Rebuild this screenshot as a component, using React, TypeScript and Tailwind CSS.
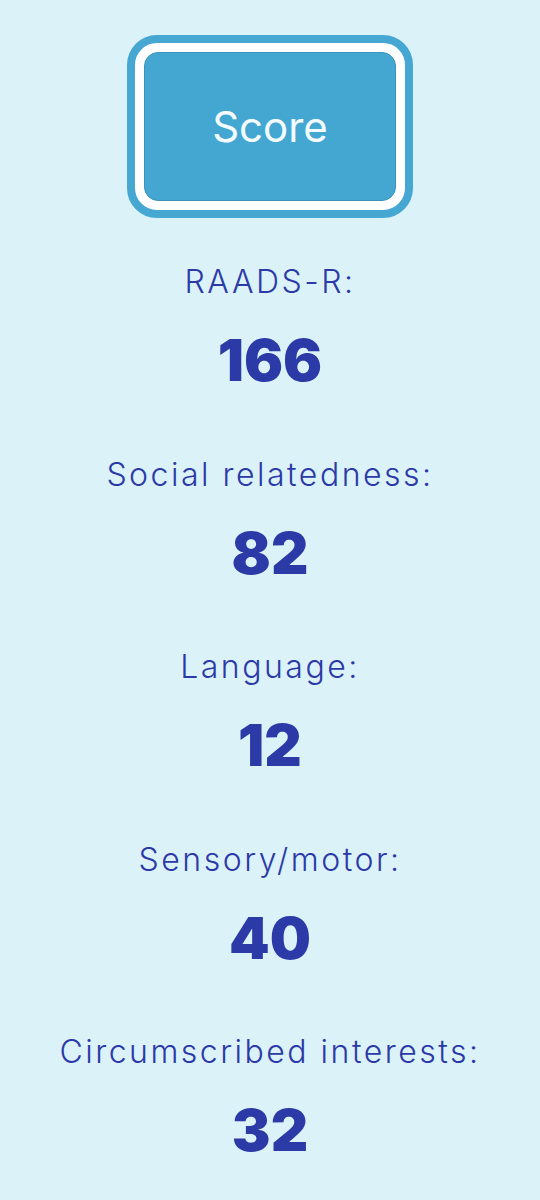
import React from "react";

const items = [
  { label: "RAADS-R:", value: "166" },
  { label: "Social relatedness:", value: "82" },
  { label: "Language:", value: "12" },
  { label: "Sensory/motor:", value: "40" },
  { label: "Circumscribed interests:", value: "32" },
];

export default function App() {
  return (
    <div
      className="w-[540px] h-[1200px] bg-[#dbf2f9] flex flex-col items-center pt-[35px]"
      style={{ fontFamily: "Inter, 'Open Sans', sans-serif" }}
    >
      <div className="w-[286px] h-[183px] rounded-[30px] border-[8px] border-[#45a7d2] bg-white p-[9px]">
        <button className="w-full h-full rounded-[14px] bg-[#44a7d2] border border-[#3a93bd] flex items-center justify-center text-[#f3fbfe] text-[42px] font-normal">
          Score
        </button>
      </div>
      <div className="flex flex-col items-center mt-[44px] gap-[59.5px]">
        {items.map((it) => (
          <div key={it.label} className="flex flex-col items-center gap-[23px] text-[#2c3aa7]">
            <div className="h-[40px] leading-[40px] text-[32px] font-light tracking-[2.5px] whitespace-nowrap">{it.label}</div>
            <div className="h-[70px] leading-[70px] text-[58px] font-black">{it.value}</div>
          </div>
        ))}
      </div>
    </div>
  );
}
